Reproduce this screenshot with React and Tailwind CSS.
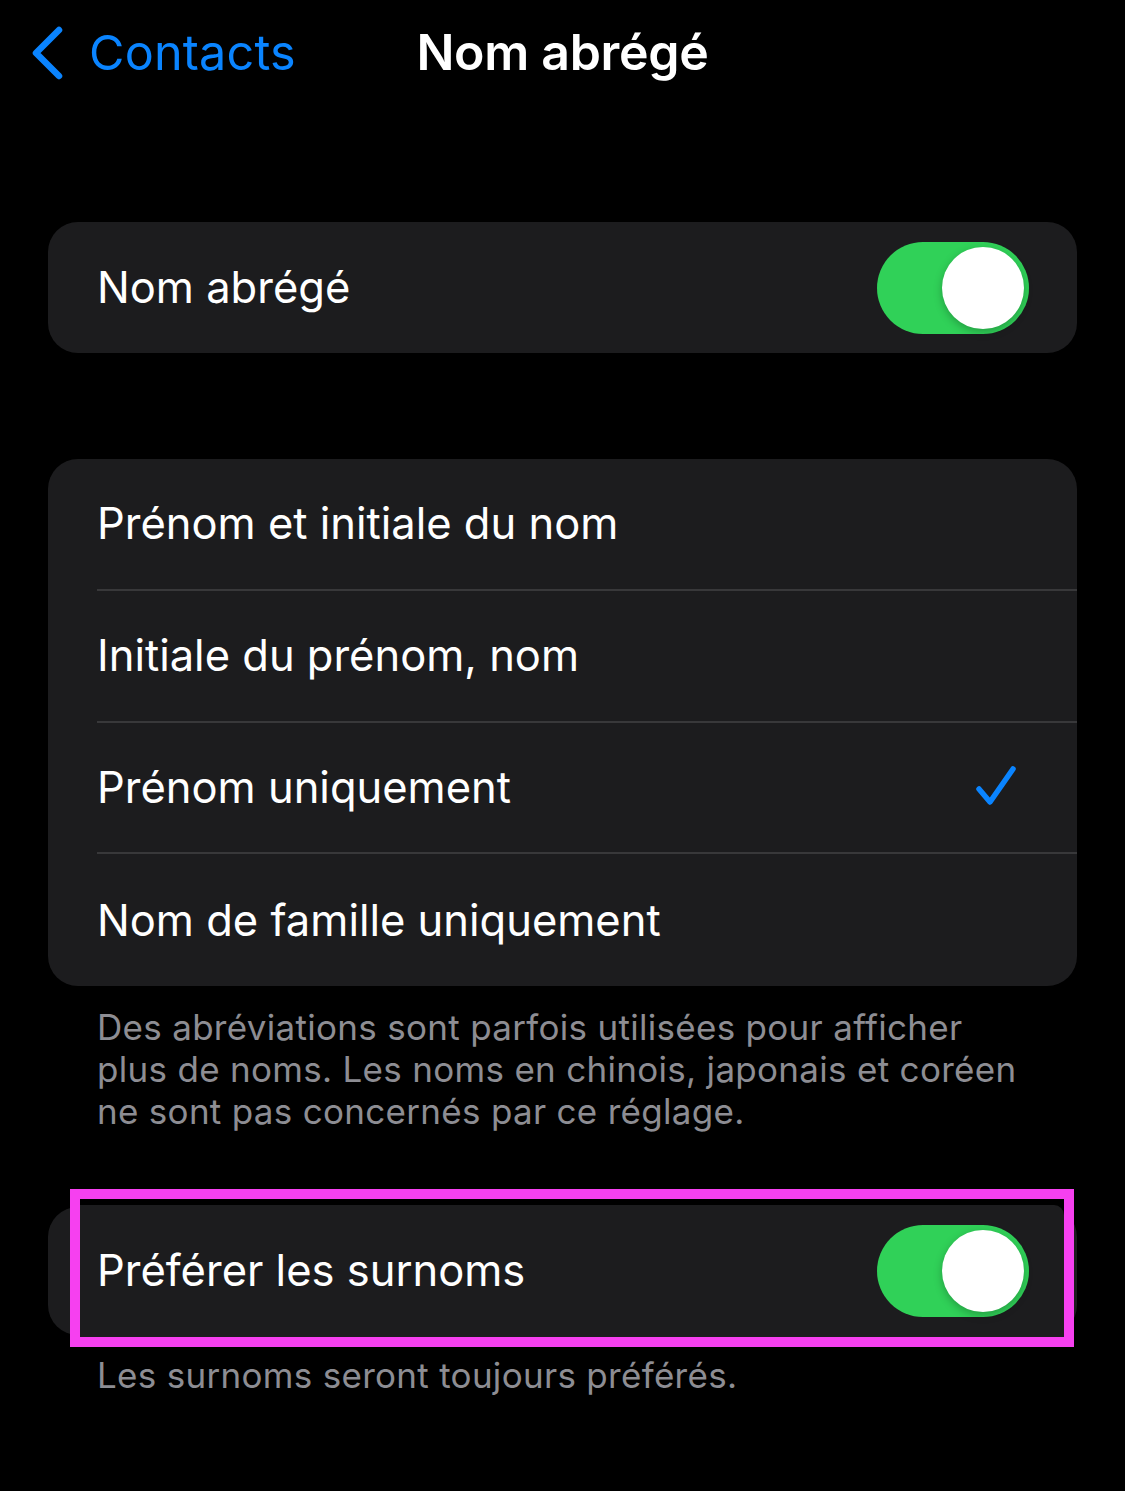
import React from "react";

const font = { fontFamily: "Inter, 'Noto Sans', sans-serif" };

function Toggle() {
  return (
    <div className="w-[152px] h-[92px] rounded-full bg-[#30d158] relative shrink-0">
      <div className="absolute right-[5px] top-[5px] w-[82px] h-[82px] rounded-full bg-white shadow-[0_3px_8px_rgba(0,0,0,0.25)]" />
    </div>
  );
}

function Check() {
  return (
    <svg width="44" height="44" viewBox="0 0 44 44" fill="none">
      <path d="M4 24 L15 37 L38 4" stroke="#0a84ff" strokeWidth="5.5" strokeLinecap="round" strokeLinejoin="round" />
    </svg>
  );
}

export default function App() {
  const rows = [
    "Prénom et initiale du nom",
    "Initiale du prénom, nom",
    "Prénom uniquement",
    "Nom de famille uniquement",
  ];
  return (
    <div className="w-[1125px] h-[1491px] bg-black text-white overflow-hidden" style={font}>
      {/* Nav */}
      <div className="relative h-[104px] flex items-center">
        <div className="flex items-center pl-[30px] pt-[2px] text-[#0a84ff]">
          <svg width="34" height="54" viewBox="0 0 34 54" fill="none">
            <path d="M29 4 L6 27 L29 50" stroke="#0a84ff" strokeWidth="6.5" strokeLinecap="round" strokeLinejoin="round" />
          </svg>
          <span className="ml-[25px] text-[48.5px] leading-none tracking-[0.2px]">Contacts</span>
        </div>
        <div className="absolute inset-x-0 top-0 h-[104px] flex items-center justify-center">
          <span className="text-[50px] font-semibold leading-none tracking-[-0.3px]">Nom abrégé</span>
        </div>
      </div>

      <div className="px-[48px]">
        {/* Card 1 */}
        <div className="mt-[118px] h-[131px] bg-[#1c1c1e] rounded-[30px] flex items-center justify-between pl-[49px] pr-[48px]">
          <span className="text-[43.5px]">Nom abrégé</span>
          <Toggle />
        </div>

        {/* Card 2 */}
        <div className="mt-[106px] bg-[#1c1c1e] rounded-[30px] overflow-hidden">
          {rows.map((r, i) => (
            <div key={r} className="pl-[49px]">
              <div className={"h-[131.75px] flex items-center justify-between pr-[58px] " + (i < rows.length - 1 ? "border-b-2 border-[#38383a]" : "")}>
                <span className="text-[43.5px]">{r}</span>
                {i === 2 && <Check />}
              </div>
            </div>
          ))}
        </div>

        {/* Footer */}
        <p className="mt-[20px] pl-[49px] pr-[45px] text-[35px] leading-[42px] text-[#8d8d93] tracking-[0.3px]">
          Des abréviations sont parfois utilisées pour afficher plus de noms. Les noms en chinois, japonais et coréen ne sont pas concernés par ce réglage.
        </p>

        {/* Card 3 with highlight */}
        <div className="relative mt-[75px] h-[128px]">
          <div className="absolute inset-0 bg-[#1c1c1e] rounded-[30px]" />
          <div className="absolute left-[22px] top-[-18px] w-[1004px] h-[158px] border-[10px] border-[#f640f0] bg-black">
            <div className="mt-[6px] h-[132px] bg-[#1c1c1e] rounded-tr-[10px] flex items-center justify-between pl-[17px] pr-[35px]">
              <span className="text-[43.5px]">Préférer les surnoms</span>
              <Toggle />
            </div>
          </div>
        </div>

        <p className="mt-[19px] pl-[49px] text-[35px] leading-[42px] text-[#8d8d93] tracking-[0.3px]">
          Les surnoms seront toujours préférés.
        </p>
      </div>
    </div>
  );
}
